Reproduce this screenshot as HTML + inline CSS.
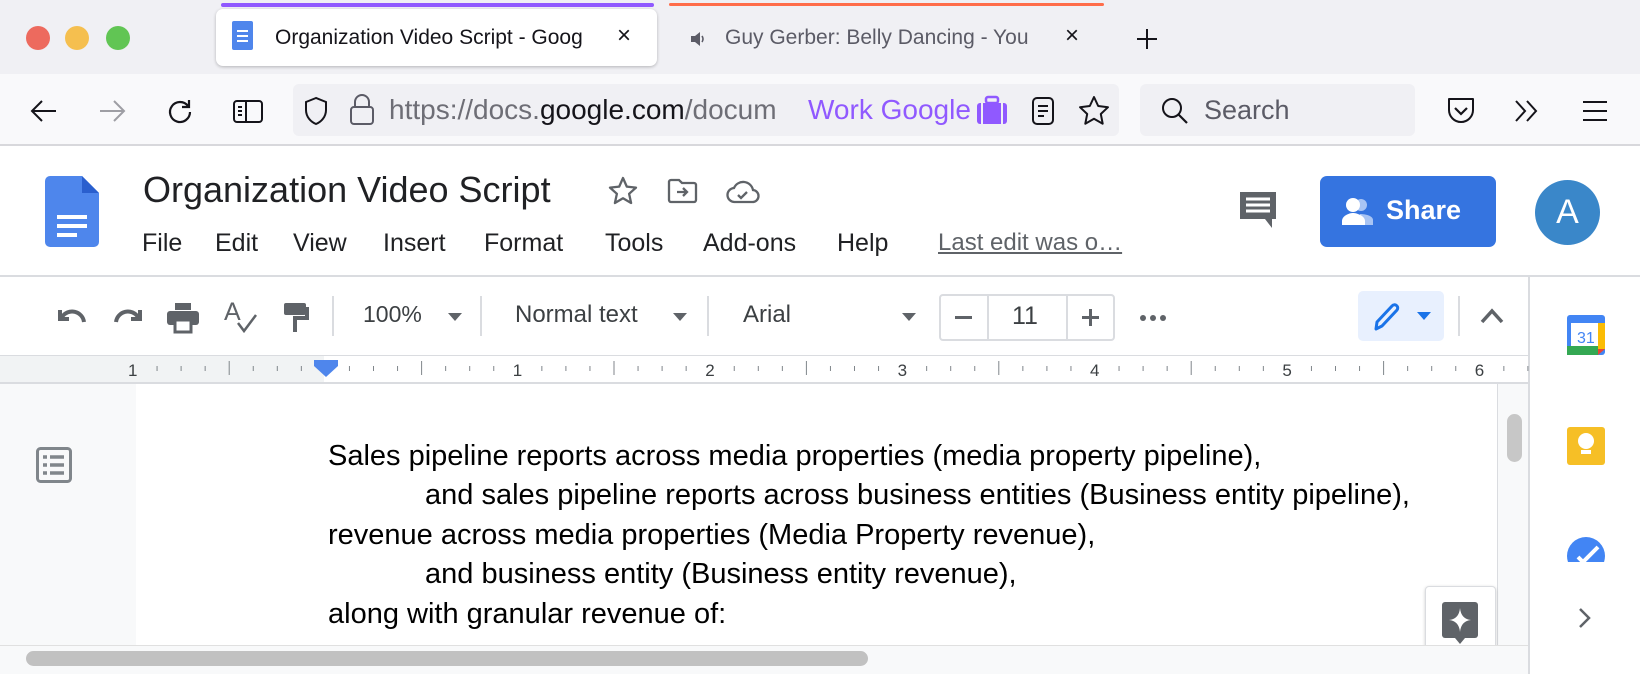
<!DOCTYPE html>
<html><head><meta charset="utf-8"><style>
*{margin:0;padding:0;box-sizing:border-box}
body{width:1640px;height:674px;overflow:hidden;background:#fff;font-family:"Liberation Sans",Arial,sans-serif;position:relative}
.a{position:absolute}
.t{white-space:nowrap}
svg{position:absolute;overflow:visible}
</style></head><body>
<!-- tab bar -->
<div class="a" style="left:0;top:0;width:1640px;height:74px;background:#f0f0f4"></div>
<div class="a" style="left:26px;top:26px;width:24px;height:24px;border-radius:50%;background:#ed6a5e"></div>
<div class="a" style="left:65px;top:26px;width:24px;height:24px;border-radius:50%;background:#f5bf4f"></div>
<div class="a" style="left:106px;top:26px;width:24px;height:24px;border-radius:50%;background:#61c554"></div>
<div class="a" style="left:221px;top:3px;width:433px;height:4px;background:#9059ff;border-radius:2px"></div>
<div class="a" style="left:669px;top:3px;width:435px;height:3px;background:#ff6d4a;border-radius:2px"></div>
<div class="a" style="left:216px;top:9px;width:441px;height:57px;background:#fff;border-radius:7px;box-shadow:0 1px 3px rgba(0,0,0,.25)"></div>
<div class="a" style="left:232px;top:21px;width:21px;height:29px;background:#4f86ec;border-radius:2px"></div>
<div class="a" style="left:237px;top:30px;width:11px;height:2px;background:#fff;box-shadow:0 5px 0 #fff,0 10px 0 #fff"></div>
<div class="a t" style="left:275px;top:26px;font-size:21px;color:#15141a;width:340px;overflow:hidden">Organization Video Script - Goog</div>
<div class="a t" style="left:617px;top:22px;font-size:24px;color:#15141a">×</div>
<svg style="left:689px;top:30px" width="18" height="18"><path d="M2 6h4l5-4v14l-5-4H2z" fill="#5b5b66"/><path d="M13 6q2 3 0 6" stroke="#5b5b66" stroke-width="1.6" fill="none"/></svg>
<div class="a t" style="left:725px;top:26px;font-size:21px;color:#5b5b66;width:345px;overflow:hidden">Guy Gerber: Belly Dancing - You</div>
<div class="a t" style="left:1065px;top:22px;font-size:24px;color:#15141a">×</div>
<svg style="left:1136px;top:28px" width="22" height="22"><path d="M11 1v20M1 11h20" stroke="#15141a" stroke-width="2"/></svg>
<!-- nav bar -->
<div class="a" style="left:0;top:74px;width:1640px;height:72px;background:#f9f9fb;border-bottom:2px solid #d8d8dc"></div>
<svg style="left:30px;top:99px" width="28" height="24"><path d="M26 12H3M12 2L2 12l10 10" stroke="#15141a" stroke-width="2" fill="none"/></svg>
<svg style="left:98px;top:99px" width="28" height="24"><path d="M2 12h23M16 2l10 10-10 10" stroke="#9e9ea4" stroke-width="2" fill="none"/></svg>
<svg style="left:166px;top:98px" width="28" height="28"><path d="M22 8A10 10 0 1 0 24 14M23 2v7h-7" stroke="#15141a" stroke-width="2.2" fill="none"/></svg>
<svg style="left:233px;top:100px" width="30" height="24"><rect x="1" y="1" width="28" height="21" rx="3" stroke="#15141a" stroke-width="2" fill="none"/><path d="M13 1v21M5 7h4M5 11h4M5 15h4" stroke="#15141a" stroke-width="2"/></svg>
<div class="a" style="left:293px;top:84px;width:826px;height:52px;background:#f0f0f4;border-radius:6px"></div>
<svg style="left:303px;top:96px" width="26" height="30"><path d="M13 2L3 6v8c0 7 5 12 10 14 5-2 10-7 10-14V6z" stroke="#15141a" stroke-width="2" fill="none"/></svg>
<svg style="left:349px;top:94px" width="26" height="32"><rect x="2" y="13" width="22" height="17" rx="3" stroke="#5b5b66" stroke-width="2" fill="none"/><path d="M6 13V8a7 7 0 0 1 14 0v5" stroke="#5b5b66" stroke-width="2" fill="none"/></svg>
<div class="a t" style="left:389px;top:94px;font-size:28px;color:#6e6e76;width:418px;overflow:hidden">https://docs.<span style="color:#15141a">google.com</span>/docum</div>
<div class="a t" style="left:808px;top:94px;font-size:28px;color:#9059ff">Work Google</div>
<svg style="left:977px;top:96px" width="30" height="28"><rect x="9" y="1" width="12" height="6" rx="2" stroke="#9059ff" stroke-width="2.5" fill="none"/><rect x="0" y="7" width="30" height="21" rx="3" fill="#9059ff"/><path d="M5 7v21M25 7v21" stroke="#f0f0f4" stroke-width="2"/></svg>
<svg style="left:1032px;top:97px" width="22" height="28"><rect x="1" y="1" width="20" height="26" rx="4" stroke="#15141a" stroke-width="2" fill="none"/><path d="M6 9h10M6 14h10M6 19h6" stroke="#15141a" stroke-width="2"/></svg>
<svg style="left:1078px;top:95px" width="32" height="32"><path d="M16 2l4.2 9 9.8 1.2-7.2 6.8 1.9 9.7L16 23.8l-8.7 4.9 1.9-9.7L2 12.2l9.8-1.2z" stroke="#15141a" stroke-width="2" fill="none" stroke-linejoin="round"/></svg>
<div class="a" style="left:1140px;top:84px;width:275px;height:52px;background:#f0f0f4;border-radius:6px"></div>
<svg style="left:1161px;top:97px" width="28" height="28"><circle cx="11" cy="11" r="9" stroke="#15141a" stroke-width="2" fill="none"/><path d="M17.5 17.5L26 26" stroke="#15141a" stroke-width="2.2"/></svg>
<div class="a t" style="left:1204px;top:95px;font-size:27px;color:#5b5b66">Search</div>
<svg style="left:1446px;top:97px" width="30" height="30"><path d="M3 2h24v11a12 12 0 0 1-24 0z" stroke="#15141a" stroke-width="2" fill="none" stroke-linejoin="round"/><path d="M9 11l6 6 6-6" stroke="#15141a" stroke-width="2.2" fill="none"/></svg>
<svg style="left:1513px;top:99px" width="28" height="24"><path d="M3 2l9 10-9 10M14 2l9 10-9 10" stroke="#15141a" stroke-width="2" fill="none"/></svg>
<svg style="left:1582px;top:100px" width="26" height="22"><path d="M1 2h24M1 11h24M1 20h24" stroke="#15141a" stroke-width="2"/></svg>
<!-- docs header -->
<svg style="left:45px;top:176px" width="54" height="71"><path d="M5 0h32l17 17v49a5 5 0 0 1-5 5H5a5 5 0 0 1-5-5V5a5 5 0 0 1 5-5z" fill="#4e86ec"/><path d="M37 0v17h17z" fill="#2a5fce"/><path d="M12 41h30M12 50h30M12 59h20" stroke="#fff" stroke-width="4"/></svg>
<div class="a t" style="left:143px;top:169px;font-size:36px;color:#202124">Organization Video Script</div>
<svg style="left:608px;top:176px" width="30" height="30"><path d="M15 2l3.8 8.6 9.2 1-6.9 6.2 2 9.2L15 22.3 6.9 27l2-9.2L2 11.6l9.2-1z" stroke="#5f6368" stroke-width="2.3" fill="none" stroke-linejoin="round"/></svg>
<svg style="left:667px;top:178px" width="31" height="26"><path d="M2 4a2 2 0 0 1 2-2h8l3 3h12a2 2 0 0 1 2 2v15a2 2 0 0 1-2 2H4a2 2 0 0 1-2-2z" stroke="#5f6368" stroke-width="2.3" fill="none"/><path d="M10 14h10M16 10l4 4-4 4" stroke="#5f6368" stroke-width="2.3" fill="none"/></svg>
<svg style="left:726px;top:180px" width="34" height="24"><path d="M9 22a7 7 0 0 1-1-14A10 10 0 0 1 27 10a6 6 0 0 1-1 12z" stroke="#5f6368" stroke-width="2.3" fill="none"/><path d="M12 15l3 3 6-6" stroke="#5f6368" stroke-width="2.3" fill="none"/></svg>
<div class="a t" style="left:142px;top:229px;font-size:25px;color:#202124">File</div>
<div class="a t" style="left:215px;top:229px;font-size:25px;color:#202124">Edit</div>
<div class="a t" style="left:293px;top:229px;font-size:25px;color:#202124">View</div>
<div class="a t" style="left:383px;top:229px;font-size:25px;color:#202124">Insert</div>
<div class="a t" style="left:484px;top:229px;font-size:25px;color:#202124">Format</div>
<div class="a t" style="left:605px;top:229px;font-size:25px;color:#202124">Tools</div>
<div class="a t" style="left:703px;top:229px;font-size:25px;color:#202124">Add-ons</div>
<div class="a t" style="left:837px;top:229px;font-size:25px;color:#202124">Help</div>
<div class="a t" style="left:938px;top:229px;font-size:24px;color:#5f6368;text-decoration:underline">Last edit was o…</div>
<svg style="left:1238px;top:190px" width="40" height="40"><path d="M2 2h36v27H34v9l-7-9H2z" fill="#5f6368"/><path d="M8 9h24M8 15h24M8 21h24" stroke="#fff" stroke-width="3"/></svg>
<div class="a" style="left:1320px;top:176px;width:176px;height:71px;background:#3574e0;border-radius:7px"></div>
<svg style="left:1342px;top:197px" width="33" height="30"><circle cx="19" cy="8" r="6" fill="#a8c4f4"/><path d="M18 17c6 0 13 2 13 6v5H18z" fill="#a8c4f4"/><circle cx="11" cy="8" r="7" fill="#fff"/><path d="M0 28v-4c0-5 7-8 11-8s12 3 12 8v4z" fill="#fff"/></svg>
<div class="a t" style="left:1386px;top:195px;font-size:27px;color:#fff;font-weight:bold">Share</div>
<div class="a" style="left:1535px;top:180px;width:65px;height:65px;border-radius:50%;background:#3a87c9;color:#fff;font-size:34px;text-align:center;line-height:65px">A</div>
<div class="a" style="left:0;top:275px;width:1640px;height:2px;background:#dadce0"></div>
<div class="a" style="left:1528px;top:277px;width:2px;height:397px;background:#dadce0"></div>
<!-- toolbar -->
<svg style="left:56px;top:304px" width="32" height="22"><path d="M4 6v9h9" stroke="#5f6368" stroke-width="4" fill="none"/><path d="M6 13a12 12 0 0 1 22 5" stroke="#5f6368" stroke-width="4" fill="none"/></svg>
<svg style="left:112px;top:304px" width="32" height="22"><path d="M28 6v9h-9" stroke="#5f6368" stroke-width="4" fill="none"/><path d="M26 13a12 12 0 0 0-22 5" stroke="#5f6368" stroke-width="4" fill="none"/></svg>
<svg style="left:167px;top:303px" width="32" height="29"><rect x="8" y="0" width="16" height="7" fill="#5f6368"/><rect x="0" y="8" width="32" height="14" rx="3" fill="#5f6368"/><rect x="8" y="17" width="16" height="12" fill="#fff" stroke="#5f6368" stroke-width="3"/></svg>
<div class="a t" style="left:224px;top:298px;font-size:25px;color:#5f6368">A</div>
<svg style="left:236px;top:314px" width="22" height="20"><path d="M2 9l6 8 12-16" stroke="#5f6368" stroke-width="2.5" fill="none"/></svg>
<svg style="left:284px;top:303px" width="24" height="30"><rect x="0" y="0" width="22" height="12" rx="2" fill="#5f6368"/><path d="M21 6h2v9H11v14" stroke="#5f6368" stroke-width="4" fill="none"/></svg>
<div class="a" style="left:332px;top:296px;width:2px;height:40px;background:#dadce0"></div>
<div class="a t" style="left:363px;top:301px;font-size:23px;color:#3c4043">100%</div>
<div class="a" style="left:448px;top:313px;border:7px solid transparent;border-top:8px solid #5f6368"></div>
<div class="a" style="left:480px;top:296px;width:2px;height:40px;background:#dadce0"></div>
<div class="a t" style="left:515px;top:301px;font-size:24px;color:#3c4043">Normal text</div>
<div class="a" style="left:673px;top:313px;border:7px solid transparent;border-top:8px solid #5f6368"></div>
<div class="a" style="left:707px;top:296px;width:2px;height:40px;background:#dadce0"></div>
<div class="a t" style="left:743px;top:301px;font-size:24px;color:#3c4043">Arial</div>
<div class="a" style="left:902px;top:313px;border:7px solid transparent;border-top:8px solid #5f6368"></div>
<div class="a" style="left:939px;top:294px;width:176px;height:47px;border:2px solid #dadce0;border-radius:4px"></div>
<div class="a" style="left:987px;top:294px;width:2px;height:47px;background:#dadce0"></div>
<div class="a" style="left:1066px;top:294px;width:2px;height:47px;background:#dadce0"></div>
<div class="a" style="left:955px;top:316px;width:17px;height:3px;background:#5f6368"></div>
<div class="a t" style="left:1012px;top:302px;font-size:25px;color:#3c4043">11</div>
<div class="a" style="left:1082px;top:316px;width:17px;height:3px;background:#5f6368"></div>
<div class="a" style="left:1089px;top:309px;width:3px;height:17px;background:#5f6368"></div>
<div class="a" style="left:1140px;top:315px;width:6px;height:6px;border-radius:50%;background:#5f6368;box-shadow:10px 0 0 #5f6368,20px 0 0 #5f6368"></div>
<div class="a" style="left:1358px;top:291px;width:86px;height:50px;background:#e8f0fe;border-radius:5px"></div>
<svg style="left:1372px;top:302px" width="28" height="30"><path d="M4 27l1-7L20 4a3 3 0 0 1 5 4L10 24z" stroke="#1a73e8" stroke-width="3" fill="none" stroke-linejoin="round"/></svg>
<div class="a" style="left:1417px;top:312px;border:7px solid transparent;border-top:8px solid #1a73e8"></div>
<div class="a" style="left:1458px;top:296px;width:2px;height:40px;background:#dadce0"></div>
<svg style="left:1480px;top:308px" width="24" height="16"><path d="M2 14L12 3l10 11" stroke="#5f6368" stroke-width="3.5" fill="none"/></svg>
<!-- side panel icons -->
<svg style="left:1567px;top:315px" width="38" height="40"><rect x="0" y="0" width="38" height="40" rx="3" fill="#4285f4"/><rect x="4" y="8" width="30" height="23" fill="#fff"/><rect x="0" y="31" width="31" height="9" fill="#34a853"/><rect x="31" y="8" width="7" height="26" fill="#fbbc04"/><path d="M31 34h7l-7 6z" fill="#ea4335"/><text x="10" y="28" font-family="Liberation Sans" font-size="16" fill="#4285f4">31</text></svg>
<div class="a" style="left:1567px;top:427px;width:38px;height:38px;border-radius:3px;background:#f6bf26"></div>
<div class="a" style="left:1578px;top:433px;width:16px;height:16px;border-radius:50%;background:#fff"></div>
<div class="a" style="left:1581px;top:450px;width:10px;height:4px;background:#fff"></div>
<div class="a" style="left:1567px;top:537px;width:38px;height:38px;border-radius:50%;background:#4285f4;clip-path:inset(0 0 13px 0)"></div>
<svg style="left:1576px;top:545px" width="24" height="18"><path d="M2 12l5 5L22 2" stroke="#fff" stroke-width="4" fill="none"/></svg>
<div class="a" style="left:1567px;top:562px;width:40px;height:20px;background:#fff"></div>
<svg style="left:1577px;top:606px" width="16" height="24"><path d="M3 3l9 9-9 9" stroke="#5f6368" stroke-width="2.5" fill="none"/></svg>
<!-- ruler -->
<div class="a" style="left:0;top:355px;width:1528px;height:29px;background:#fff;border-top:1px solid #dadce0;border-bottom:2px solid #dadce0"></div>
<div class="a" style="left:0;top:356px;width:324px;height:26px;background:#f1f3f4"></div>
<svg style="left:0;top:356px" width="1528" height="26" id="ruler"></svg>
<div class="a" style="left:314px;top:360px;width:24px;height:6px;background:#4f86ec"></div>
<div class="a" style="left:314px;top:366px;border-left:12px solid transparent;border-right:12px solid transparent;border-top:11px solid #4f86ec"></div>
<!-- doc area -->
<div class="a" style="left:0;top:384px;width:1528px;height:262px;background:#f8f9fa"></div>
<div class="a" style="left:136px;top:384px;width:1362px;height:262px;background:#fff;border-right:1px solid #dadce0"></div>
<div class="a" style="left:1507px;top:414px;width:15px;height:48px;border-radius:8px;background:#c7c7c7"></div>
<svg style="left:36px;top:447px" width="36" height="36"><rect x="1.5" y="1.5" width="33" height="33" rx="3" stroke="#80868b" stroke-width="3" fill="none"/><path d="M7 10h4M14 10h14M7 18h4M14 18h14M7 26h4M14 26h14" stroke="#80868b" stroke-width="3.5"/></svg>
<div class="a t" style="left:328px;top:437px;font-size:29px;line-height:39.4px;color:#000">Sales pipeline reports across media properties (media property pipeline),<br><span style="padding-left:97px">and sales pipeline reports across business entities (Business entity pipeline),</span><br>revenue across media properties (Media Property revenue),<br><span style="padding-left:97px">and business entity (Business entity revenue),</span><br>along with granular revenue of:</div>
<div class="a" style="left:1425px;top:586px;width:71px;height:71px;background:#fff;border:1px solid #dadce0;border-radius:4px;box-shadow:0 1px 3px rgba(0,0,0,.2)"></div>
<svg style="left:1442px;top:602px" width="38" height="42"><rect x="0" y="0" width="36" height="36" rx="3" fill="#5f6368"/><path d="M13 36h10l-5 6z" fill="#5f6368"/><path d="M18 6q1 11 11 12-10 1-11 12-1-11-11-12 10-1 11-12z" fill="#fff"/></svg>
<!-- bottom scrollbar -->
<div class="a" style="left:0;top:645px;width:1528px;height:29px;background:#f8f9fa;border-top:1px solid #e0e0e0"></div>
<div class="a" style="left:26px;top:651px;width:842px;height:15px;border-radius:8px;background:#c1c1c1"></div>
<script>
(function(){var s=document.getElementById('ruler'),h='',x0=133,u=192.4;
for(var i=0;i<8*8;i++){var x=x0+i*u/8;if(x>1528)break;
if(i%8==0){var n=i/8;var lab=n==0?'1':String(n-1);if(n==1)continue;h+='<text x="'+(x-5)+'" y="20" font-family="Liberation Sans" font-size="17" fill="#3c4043">'+lab+'</text>';}
else if(i%4==0)h+='<line x1="'+x+'" y1="5" x2="'+x+'" y2="19" stroke="#80868b" stroke-width="1"/>';
else h+='<line x1="'+x+'" y1="10" x2="'+x+'" y2="15" stroke="#80868b" stroke-width="1"/>';}
s.innerHTML=h;})();
</script>
</body></html>
